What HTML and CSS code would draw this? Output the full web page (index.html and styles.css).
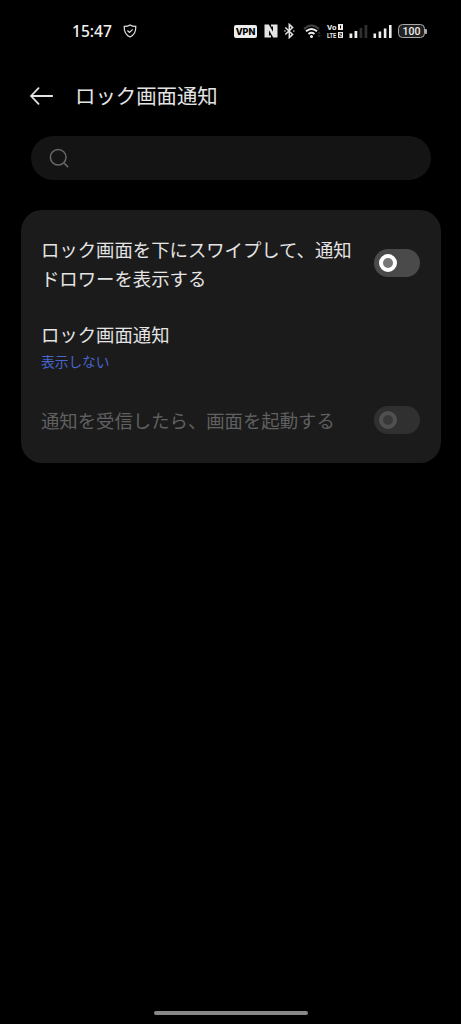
FILE: index.html
```html
<!DOCTYPE html>
<html lang="ja">
<head>
<meta charset="utf-8">
<title>ロック画面通知</title>
<link rel="stylesheet" href="styles.css">
</head>
<body>
<div class="screen">
  <div class="status">
    <span class="clock">15:47</span>
    <svg class="shield" width="14" height="14" viewBox="0 0 14 14"><path d="M7 .9 C5.4 2 3.2 2.3 1.2 2.3 C1 7 2 10.8 7 13 C12 10.8 13 7 12.800 2.300 C10.800 2.300 8.600 2 7 .9Z"/><path d="M4.400 6.500 L6.500 8.500 L9.700 5.300"/></svg>
    <span class="vpn">VPN</span>
    <svg class="nfc" width="14" height="14" viewBox="0 0 14 14"><path fill="#e4e4e4" d="M.5 .5 H4.800 L9 7.800 V2.500 H7 V.5 H13.500 V13.500 H9.200 L5 6.200 V11.500 H7 V13.500 H.5Z"/></svg>
    <svg class="bt" width="11" height="16" viewBox="0 0 11 16"><path d="M1.300 4.500 L8.600 11.400 L5.300 14.600 V1.400 L8.600 4.600 L1.300 11.500"/><circle cx="1" cy="8" r=".8"/><circle cx="9.800" cy="8" r=".8"/></svg>
    <svg class="wifi" width="18" height="15" viewBox="0 0 18 15"><path d="M1 5 Q8.500 -2 16 5" stroke="#444"/><path d="M3 7.300 Q8.500 2.600 14 7.300"/><path d="M5.500 10 Q8.500 7.600 11.500 10"/><circle cx="8.500" cy="12.500" r="1.500"/><path class="dim" d="M14.500 9.500 l1.600-2 l1.600 2z M14.500 11.300 l1.600 2 l1.600-2z"/></svg>
    <span class="volte">
      <span class="line"><span class="vo">Vo</span><svg width="5" height="6" viewBox="0 0 5 6"><path fill="#eee" fill-rule="evenodd" d="M0 0H5V6H0ZM2 1.500V4.500H3V1.500Z"/></svg></span>
      <span class="line"><span class="lte">LTE</span><svg width="5" height="6" viewBox="0 0 5 6"><path fill="#eee" d="M0 0H5V6H0Z"/><path fill="none" stroke="#111" stroke-width=".8" d="M1.300 1.400H3.500V3H1.500V4.600H3.700"/></svg></span>
    </span>
    <svg class="sig1" width="19" height="15" viewBox="0 0 19 15"><path fill="#eee" d="M.5 9.500h2.800v4.500H.5zM5.500 7h2.800v7H5.500z"/><path fill="#303030" d="M10.500 4h2.800v10h-2.800zM15.500 1h2.800v13h-2.800z"/></svg>
    <svg class="sig2" width="19" height="15" viewBox="0 0 19 15"><path fill="#eee" d="M.5 9.500h2.600v4.500H.5zM5.600 7.500h2.600v6.500H5.600zM10.800 4.500h2.600v9.500h-2.600zM16 1h2.600v13H16z"/></svg>
    <span class="battery"><span class="cell">100</span><span class="tip"></span></span>
  </div>
  <header class="header">
    <svg width="24" height="20" viewBox="0 0 24 20"><path d="M22.200 10 H1 M8.500 2.200 L1 10 L8.500 17.800"/></svg>
    <h1>ロック画面通知</h1>
  </header>
  <div class="search">
    <svg width="20" height="20" viewBox="0 0 20 20"><circle cx="9.200" cy="9.200" r="7.800"/><path d="M14.800 14.800 L18.600 18.600"/></svg>
  </div>
  <main class="card">
    <div class="row row-swipe">
      <div class="label">ロック画面を下にスワイプして、通知<br>ドロワーを表示する</div>
      <div class="toggle"><span class="knob"></span></div>
    </div>
    <div class="row row-notify">
      <div>
        <div class="label">ロック画面通知</div>
        <div class="value">表示しない</div>
      </div>
    </div>
    <div class="row row-wake disabled">
      <div class="label">通知を受信したら、画面を起動する</div>
      <div class="toggle"><span class="knob"></span></div>
    </div>
  </main>
  <div class="home"></div>
</div>
</body>
</html>
```
FILE: styles.css
```css
* { box-sizing: border-box; }
body { margin: 0; background: #000; }
svg { display: block; flex: none; }
.screen {
  width: 461px;
  height: 1024px;
  display: flex;
  flex-direction: column;
  background: #000;
  color: #e4e4e4;
  font-family: "Noto Sans CJK JP", sans-serif;
  overflow: hidden;
}
.status {
  display: flex;
  align-items: center;
  height: 62px;
  padding-left: 72px;
  font-family: Roboto, sans-serif;
}
.clock {
  width: 51px;
  font: 500 15.600px/20px "Noto Sans", sans-serif;
  color: #f2f2f2;
  white-space: nowrap;
}
.shield { fill: none; stroke: #e0e0e0; stroke-width: 1.200; }
.vpn {
  width: 23px;
  height: 13px;
  margin-left: 97px;
  border-radius: 2px;
  background: #eee;
  color: #000;
  font: 800 9px/13px Inter, sans-serif;
  text-align: center;
}
.nfc { margin-left: 7px; }
.bt { margin-left: 6px; fill: none; stroke: #e4e4e4; stroke-width: 1.500; }
.bt circle { fill: #e4e4e4; stroke: none; }
.wifi { margin-left: 8px; fill: none; stroke: #eee; stroke-width: 2; }
.wifi circle { fill: #eee; stroke: none; }
.wifi .dim { fill: #3a3a3a; stroke: none; }
.volte {
  display: flex;
  flex-direction: column;
  gap: 1px;
  width: 17px;
  margin-left: 6px;
  color: #eee;
  font: 700 8px/7px Roboto, sans-serif;
}
.line { display: flex; align-items: center; height: 7px; }
.vo, .lte { flex: none; height: 7px; transform-origin: 0 50%; }
.vo { width: 11px; }
.lte { width: 14px; margin-right: -3px; transform: scaleX(.72); }
.sig1 { margin-left: 5px; }
.sig2 { margin-left: 5px; }
.battery { display: flex; align-items: center; margin-left: 6px; }
.cell {
  width: 27px;
  height: 14px;
  border: 1.500px solid #aaa;
  border-radius: 4.500px;
  background: #222;
  color: #eee;
  font: 500 10.500px/13px Roboto, sans-serif;
  text-align: center;
}
.tip { width: 1.500px; height: 5px; background: #aaa; border-radius: 0 1px 1px 0; }
.header {
  display: flex;
  align-items: center;
  gap: 21px;
  height: 67px;
  padding-left: 30px;
}
.header svg { fill: none; stroke: #e4e4e4; stroke-width: 1.800; stroke-linecap: round; stroke-linejoin: round; }
.header h1 { margin: 0 0 1px; font-size: 20.400px; font-weight: 400; line-height: 30px; }
.search {
  display: flex;
  align-items: center;
  width: 400px;
  height: 44px;
  margin: 7px 0 0 31px;
  padding-left: 18px;
  border-radius: 22px;
  background: #141414;
}
.search svg { fill: none; stroke: #686868; stroke-width: 1.500; stroke-linecap: round; }
.card {
  width: 420px;
  height: 253px;
  margin: 30px 0 0 21px;
  padding: 0 21px 0 20px;
  border-radius: 21px;
  background: #1b1b1b;
}
.row { display: flex; align-items: center; justify-content: space-between; }
.row-swipe { height: 106px; }
.row-swipe .label { padding-top: 1px; }
.row-notify { height: 59px; }
.row-wake { height: 89px; }
.row-wake .label { padding-top: 2px; }
.label { font-size: 18.370px; line-height: 29px; white-space: nowrap; }
.value { font-size: 13.700px; line-height: 20px; margin-top: 2px; color: #4865d0; }
.toggle {
  display: flex;
  align-items: center;
  width: 46px;
  height: 28px;
  padding-left: 5px;
  border-radius: 14px;
  background: #4a4a4a;
}
.knob { width: 18px; height: 18px; border: 4px solid #fff; border-radius: 50%; background: #777; }
.disabled .label { color: #606060; }
.disabled .toggle { background: #303030; }
.disabled .knob { border-color: #505050; background: #383838; }
.home {
  width: 154px;
  height: 4px;
  margin: auto auto 9px;
  border-radius: 2px;
  background: #888;
}
```
